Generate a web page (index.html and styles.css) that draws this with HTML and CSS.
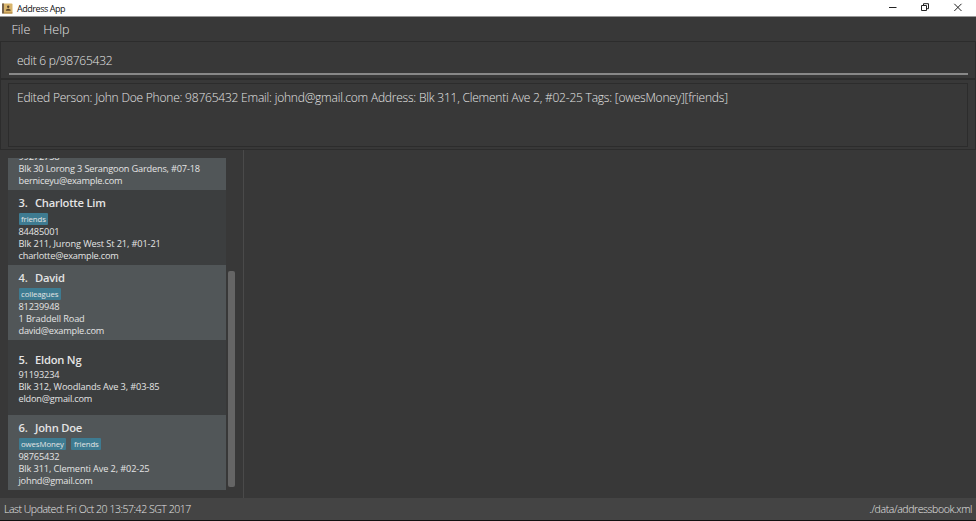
FILE: index.html
```html
<!DOCTYPE html>
<html lang="en">
<head>
<meta charset="utf-8">
<title>Address App</title>
<link rel="stylesheet" href="styles.css">
</head>
<body>
<div class="window">
  <header class="titlebar">
    <svg class="app-icon" width="11" height="11" viewBox="0 0 11 11"><rect x="0" y="0.5" width="10.5" height="10" rx="1" fill="#d9b56c"/><rect x="0" y="0.5" width="2" height="10" fill="#75614b"/><rect x="2" y="9.5" width="8.5" height="1" fill="#a67b35"/><circle cx="6.2" cy="3.8" r="1.2" fill="#5a452a"/><path d="M3.900 7.800V6.800L5.700 5.700H6.700L8.600 6.800V7.800Z" fill="#5a452a"/></svg>
    <span class="title">Address App</span>
    <svg class="controls" width="86" height="16" viewBox="0 0 86 16" fill="none" stroke="#222" stroke-width="1"><path d="M3 7.500h7.500"/><path d="M35.500 5.500h5v5h-5zM37.500 5.500v-1.800h5v5h-2"/><path d="M68.300 3.800l7.200 7.200M75.500 3.800l-7.200 7.200"/></svg>
  </header>
  <nav class="menu"><span class="file">File</span><span class="help">Help</span></nav>
  <section class="command"><div class="field"><span>edit 6 p/98765432</span></div></section>
  <section class="result"><div class="message"><span>Edited Person: John Doe Phone: 98765432 Email: johnd@gmail.com Address: Blk 311, Clementi Ave 2, #02-25 Tags: [owesMoney][friends]</span></div></section>
  <main class="content">
    <div class="list-pane">
      <div class="list">
        <article class="card alt">
          <p>99272758</p><p class="address wide">Blk 30 Lorong 3 Serangoon Gardens, #07-18</p><p class="email">berniceyu@example.com</p>
        </article>
        <article class="card">
          <h2><span class="num">3.</span><span>Charlotte Lim</span></h2>
          <div class="tags"><span>friends</span></div>
          <p>84485001</p><p class="address">Blk 211, Jurong West St 21, #01-21</p><p class="email">charlotte@example.com</p>
        </article>
        <article class="card alt">
          <h2><span class="num">4.</span><span>David</span></h2>
          <div class="tags"><span>colleagues</span></div>
          <p>81239948</p><p class="address">1 Braddell Road</p><p class="email">david@example.com</p>
        </article>
        <article class="card untagged">
          <h2><span class="num">5.</span><span>Eldon Ng</span></h2>
          <p>91193234</p><p class="address">Blk 312, Woodlands Ave 3, #03-85</p><p class="email">eldon@gmail.com</p>
        </article>
        <article class="card alt">
          <h2><span class="num">6.</span><span>John Doe</span></h2>
          <div class="tags"><span>owesMoney</span><span>friends</span></div>
          <p>98765432</p><p class="address">Blk 311, Clementi Ave 2, #02-25</p><p class="email">johnd@gmail.com</p>
        </article>
      </div>
      <div class="scrollbar"><div class="thumb"></div></div>
    </div>
    <div class="detail"></div>
  </main>
  <footer class="status"><span class="updated">Last Updated: Fri Oct 20 13:57:42 SGT 2017</span><span class="path">./data/addressbook.xml</span></footer>
</div>
</body>
</html>
```
FILE: styles.css
```css
* { box-sizing: border-box; }
body { margin: 0; background: #383838; font-family: "Open Sans", "Noto Sans", sans-serif; color: #e4e4e4; }
.window { width: 976px; height: 521px; display: flex; flex-direction: column; overflow: hidden; white-space: nowrap; }
.titlebar { height: 17px; flex: none; display: flex; align-items: center; background: #fff; border-bottom: 1px solid #999; padding: 0 4px 0 2px; color: #111; }
.title { margin-left: 4px; font-size: 9px; line-height: 16px; letter-spacing: -0.5px; padding-top: 1px; letter-spacing: -0.45px; }
.controls { margin-left: auto; }
.menu { height: 24px; flex: none; display: flex; gap: 13px; padding-left: 11.5px; font-size: 12.5px; font-weight: 300; line-height: 25px; }
.command { height: 38px; flex: none; border: 1px solid #2c2c2c; padding: 6px 7px 3px 8px; }
.field { height: 27px; border-bottom: 2px solid #888; padding-left: 8px; font-size: 12px; font-weight: 300; line-height: 26px; letter-spacing: -0.25px; }
.result { height: 71px; flex: none; border: 1px solid #2c2c2c; padding: 3px 7px 3px 7px; }
.message { height: 64px; border: 1px solid #2c2c2c; padding: 4px 0 0 8px; font-size: 12px; font-weight: 300; line-height: 19px; letter-spacing: -0.21px; }
.content { height: 348px; flex: none; display: flex; }
.list-pane { width: 244px; flex: none; display: flex; padding: 8px 0 8px 8px; gap: 2px; border-right: 1px solid #4a4a4a; }
.list { width: 218px; height: 332px; display: flex; flex-direction: column; overflow: hidden; }
.card { height: 75px; flex: none; display: flex; flex-direction: column; background: #3c3e3f; padding: 4px 10.5px 0; }
.card.alt { background: #515658; }
.card.untagged { padding-top: 11px; }
.card:first-child { height: 32px; justify-content: flex-end; padding-bottom: 3px; }
h2 { margin: 0; font-size: 11.2px; font-weight: 600; line-height: 18px; display: flex; letter-spacing: -0.22px; }
.num { width: 16.5px; }
.tags { display: flex; gap: 5px; height: 13px; padding-top: 1px; margin-bottom: 1px; }
.tags span { height: 12px; background: #3e7b91; border-radius: 1px; padding: 0 2.5px; font-size: 7.8px; line-height: 12px; letter-spacing: -0.08px; }
p { margin: 0; font-size: 9.2px; line-height: 12px; letter-spacing: -0.14px; }
.card:not(:first-child) .address { letter-spacing: -0.11px; }
.wide { letter-spacing: -0.17px; }
.email { letter-spacing: -0.2px; }
.scrollbar { width: 7px; display: flex; flex-direction: column; justify-content: flex-end; padding-bottom: 3px; }
.thumb { height: 216px; border-radius: 2px; background: #656565; }
.detail { flex: 1; }
.status { height: 23px; flex: none; display: flex; justify-content: space-between; background: #444; border-bottom: 1px solid #111; padding: 0 4px; font-size: 10.5px; font-weight: 300; line-height: 22px; letter-spacing: -0.46px; }
.path { letter-spacing: -0.39px; }
```
